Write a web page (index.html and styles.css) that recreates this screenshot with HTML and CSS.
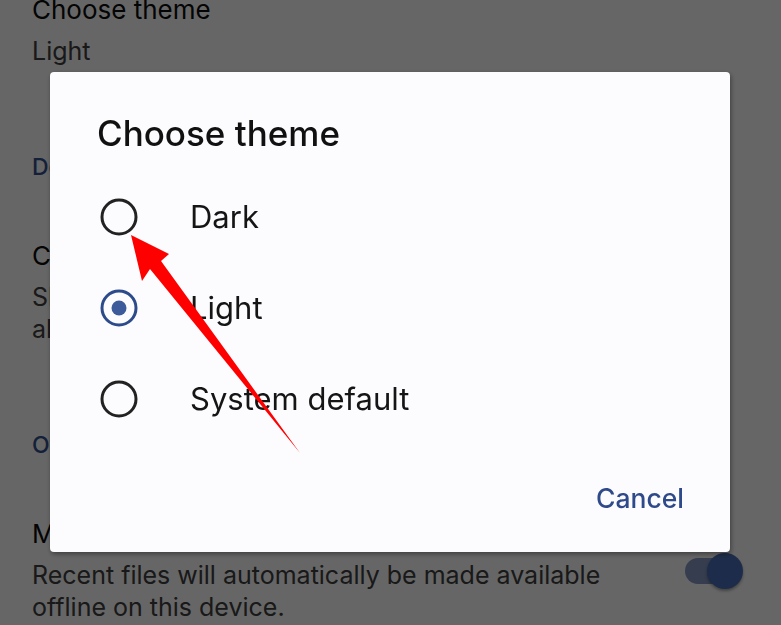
FILE: index.html
```html
<!DOCTYPE html>
<html lang="en">
<head>
<meta charset="utf-8">
<title>Choose theme</title>
<link rel="stylesheet" href="styles.css">
</head>
<body>
<main class="settings">
  <section class="group">
    <div class="item">
      <div class="item-text">
        <div class="item-title">Choose theme</div>
        <div class="item-summary">Light</div>
      </div>
    </div>
  </section>
  <section class="group">
    <h2 class="group-header">Documents cache</h2>
    <div class="item">
      <div class="item-text">
        <div class="item-title">Clear cache</div>
        <div class="item-summary">Slightly reduce storage used by clearing<br>all cached documents.</div>
      </div>
    </div>
  </section>
  <section class="group">
    <h2 class="group-header">Offline</h2>
    <div class="item">
      <div class="item-text">
        <div class="item-title">Make recent files available offline</div>
        <div class="item-summary">Recent files will automatically be made available offline on this device.</div>
      </div>
      <div class="toggle on"><span class="track"></span><span class="thumb"></span></div>
    </div>
  </section>
</main>

<div class="scrim"></div>

<div class="dialog" role="dialog" aria-labelledby="dlg-title">
  <h1 class="dialog-title" id="dlg-title">Choose theme</h1>
  <ul class="options">
    <li class="option">
      <svg class="radio" viewBox="0 0 38 38"><circle cx="19" cy="19" r="17" fill="none" stroke="#222" stroke-width="3"/></svg>
      <span class="option-label">Dark</span>
    </li>
    <li class="option">
      <svg class="radio" viewBox="0 0 38 38"><circle cx="19" cy="19" r="17" fill="none" stroke="#2d4b8b" stroke-width="3"/><circle cx="19" cy="19" r="7.5" fill="#3d5b9b"/></svg>
      <span class="option-label">Light</span>
    </li>
    <li class="option">
      <svg class="radio" viewBox="0 0 38 38"><circle cx="19" cy="19" r="17" fill="none" stroke="#222" stroke-width="3"/></svg>
      <span class="option-label">System default</span>
    </li>
  </ul>
  <div class="actions"><button class="text-btn">Cancel</button></div>
</div>

<svg class="annotation" viewBox="0 0 781 625" width="781" height="625">
  <polygon points="131,235 169,254 161,261 300,453 150,269 142,281" fill="#ff0000"/>
</svg>
</body>
</html>
```

FILE: styles.css
```css
html, body {
  margin: 0;
  padding: 0;
}
body {
  width: 781px;
  height: 625px;
  overflow: hidden;
  background: #ffffff;
  font-family: Inter, "Noto Sans", sans-serif;
  position: relative;
}

.settings {
  padding: 0 38px 0 32px;
  margin-top: -6px;
}
.group-header {
  margin: 84px 0 0;
  font-size: 23px;
  line-height: 32px;
  font-weight: 500;
  color: #34508f;
}
.group-header + .item {
  margin-top: 57px;
}
.item {
  display: flex;
  align-items: center;
  gap: 60px;
}
.item-text {
  flex: 1;
  min-width: 0;
}
.item-title {
  font-size: 26px;
  line-height: 32px;
  color: #0a0a0a;
}
.item-summary {
  margin-top: 9px;
  font-size: 25px;
  line-height: 32px;
  color: #404040;
}

.toggle {
  position: relative;
  width: 58px;
  height: 36px;
  flex: none;
}
.toggle .track {
  position: absolute;
  left: 0;
  top: 5px;
  width: 50px;
  height: 26px;
  border-radius: 13px;
  background: #8499c6;
}
.toggle .thumb {
  position: absolute;
  right: 0;
  top: 0;
  width: 36px;
  height: 36px;
  border-radius: 50%;
  background: #4a6fb8;
  box-shadow: 0 2px 3px rgba(0,0,0,0.35);
}

.scrim {
  position: fixed;
  inset: 0;
  background: rgba(0, 0, 0, 0.6);
}

.dialog {
  position: fixed;
  left: 50px;
  top: 72px;
  width: 680px;
  height: 480px;
  box-sizing: border-box;
  padding: 39px 46px 0 47px;
  background: #fcfcfe;
  border-radius: 4px;
  box-shadow: 1px 2px 5px rgba(0,0,0,0.4);
  display: flex;
  flex-direction: column;
}
.dialog-title {
  margin: 0;
  font-size: 35px;
  line-height: 44px;
  font-weight: 500;
  color: #111111;
}
.options {
  list-style: none;
  margin: 16px 0 0;
  padding: 0 0 0 3px;
}
.option {
  height: 91px;
  display: flex;
  align-items: center;
}
.radio {
  width: 38px;
  height: 38px;
  flex: none;
}
.option-label {
  margin-left: 52px;
  font-size: 31px;
  color: #151515;
}
.actions {
  display: flex;
  justify-content: flex-end;
  margin-top: 34px;
}
.text-btn {
  border: 0;
  background: none;
  padding: 0;
  font-family: Inter, "Noto Sans", sans-serif;
  font-size: 26.5px;
  line-height: 40px;
  font-weight: 500;
  color: #2f4a8a;
}

.annotation {
  position: absolute;
  left: 0;
  top: 0;
}
```
